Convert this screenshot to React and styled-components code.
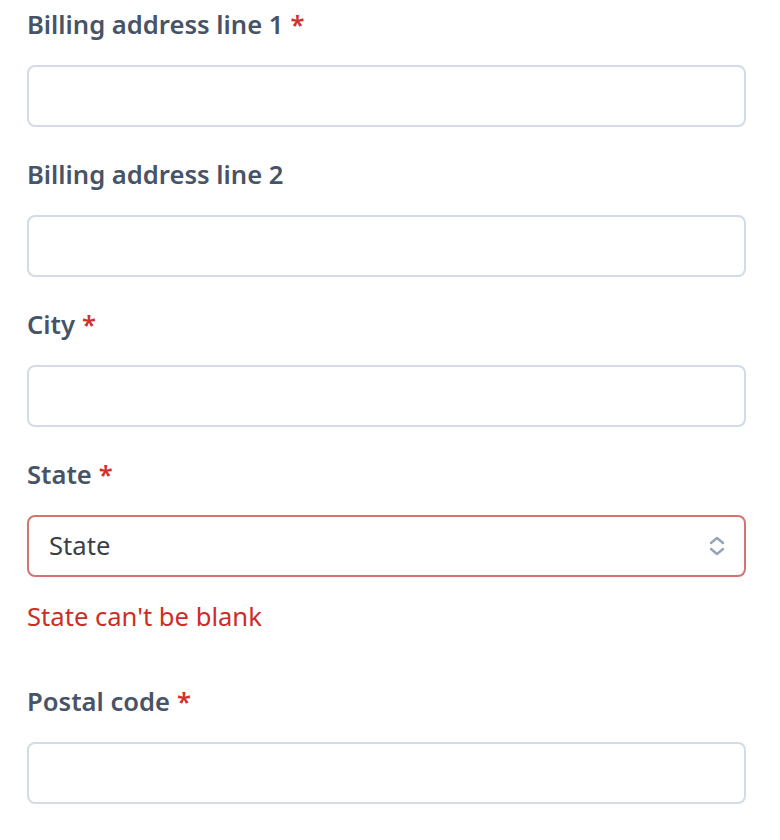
import React from 'react';
import styled, { createGlobalStyle } from 'styled-components';

const GlobalStyle = createGlobalStyle`
  html, body {
    margin: 0;
    padding: 0;
    background: #ffffff;
  }
  * {
    box-sizing: border-box;
  }
`;

const Form = styled.form`
  width: 780px;
  padding: 9px 34px 0 27px;
  display: flex;
  flex-direction: column;
  font-family: 'Noto Sans', 'Open Sans', sans-serif;
`;

const Field = styled.div`
  display: flex;
  flex-direction: column;
  gap: 24px;
  margin-bottom: ${props => props.spacing || 32}px;
`;

const Label = styled.label`
  font-size: 25.6px;
  line-height: 32px;
  font-weight: 600;
  color: #475467;
`;

const Required = styled.span`
  color: #d0312d;
  margin-left: 7px;
`;

const TextInput = styled.input`
  width: 100%;
  height: 62px;
  border: 2px solid #d3dbe6;
  border-radius: 8px;
  padding: 0 20px;
  font-family: inherit;
  font-size: 25.6px;
  color: #333;
  background: #fff;
  outline: none;
`;

const SelectBox = styled.div`
  position: relative;
  width: 100%;
  height: 62px;
  border: 2px solid ${props => props.error ? '#d47471' : '#d3dbe6'};
  border-radius: 8px;
  padding: 0 20px 2px 20px;
  display: flex;
  align-items: center;
  justify-content: space-between;
  font-size: 25.6px;
  color: #3a3f47;
  background: #fff;
`;

const Chevrons = styled.svg`
  width: 18px;
  height: 24px;
  margin-right: -2px;
  margin-top: 2px;
`;

const ErrorText = styled.div`
  font-size: 25.6px;
  line-height: 32px;
  color: #cc2d27;
`;

const fields = [
  { label: 'Billing address line 1', required: true },
  { label: 'Billing address line 2', required: false },
  { label: 'City', required: true },
];

export default function App() {
  return (
    <>
      <GlobalStyle />
      <Form>
        {fields.map(f => (
          <Field key={f.label}>
            <Label>
              {f.label}
              {f.required && <Required>*</Required>}
            </Label>
            <TextInput type="text" />
          </Field>
        ))}
        <Field spacing={53}>
          <Label>
            State<Required>*</Required>
          </Label>
          <SelectBox error>
            <span>State</span>
            <Chevrons viewBox="0 0 18 24" fill="none" stroke="#97a3b6" strokeWidth="2.4" strokeLinecap="round" strokeLinejoin="round">
              <path d="M3 9l6-5 6 5" />
              <path d="M3 15l6 5 6-5" />
            </Chevrons>
          </SelectBox>
          <ErrorText>State can't be blank</ErrorText>
        </Field>
        <Field>
          <Label>
            Postal code<Required>*</Required>
          </Label>
          <TextInput type="text" />
        </Field>
      </Form>
    </>
  );
}
